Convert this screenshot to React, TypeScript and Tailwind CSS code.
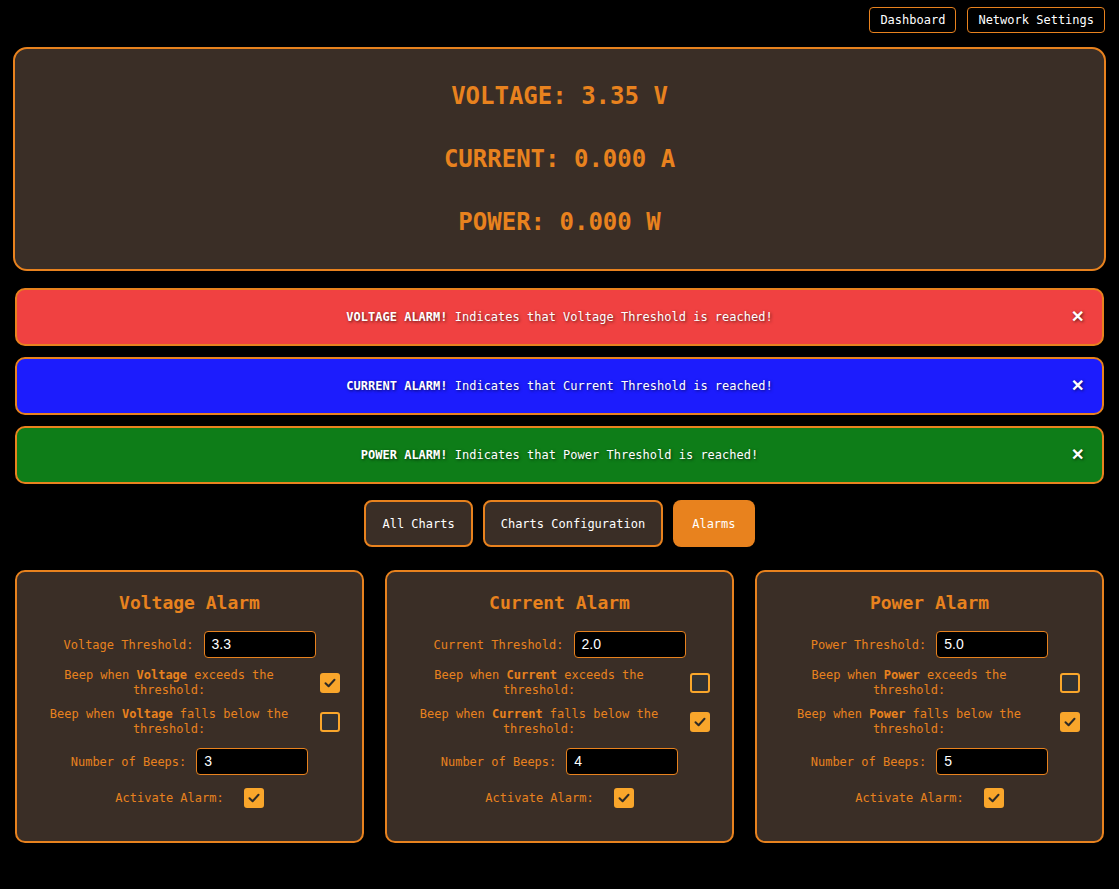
import React from "react";

const mono = { fontFamily: '"DejaVu Sans Mono", "Liberation Mono", monospace' };

function Check({ checked }: { checked: boolean }) {
  if (checked) {
    return (
      <div className="w-[20px] h-[20px] shrink-0 rounded-[3px] bg-[#f9a62b] flex items-center justify-center">
        <svg width="14" height="14" viewBox="0 0 14 14">
          <path d="M2.5 7.2 L5.6 10.2 L11.5 3.8" fill="none" stroke="#2e2a26" strokeWidth="2" strokeLinecap="round" strokeLinejoin="round" />
        </svg>
      </div>
    );
  }
  return <div className="w-[20px] h-[20px] shrink-0 rounded-[3px] bg-[#333232] border-2 border-[#f9a62b]" />;
}

function Input({ value }: { value: string }) {
  return (
    <div
      className="w-[112px] h-[27px] shrink-0 rounded-[4px] bg-black border border-[#e8821e] flex items-center px-[7px] text-white text-[14px]"
      style={{ fontFamily: '"Liberation Sans", Arial, sans-serif' }}
    >
      {value}
    </div>
  );
}

function Card({
  title,
  name,
  threshold,
  beeps,
  exceed,
  below,
}: {
  title: string;
  name: string;
  threshold: string;
  beeps: string;
  exceed: boolean;
  below: boolean;
}) {
  return (
    <div className="flex-1 h-[273px] rounded-[10px] border-2 border-[#e8821e] bg-[#3a2e26] flex flex-col items-center pt-[19px] text-[#e8821e] text-[12px]">
      <div className="text-[18px] font-bold leading-[24px]">{title}</div>
      <div className="flex items-center mt-[16px]">
        <span className="mr-[10px]">{name} Threshold:</span>
        <Input value={threshold} />
      </div>
      <div className="w-full flex items-center px-[22px] gap-[21px] mt-[10px]">
        <div className="flex-1 text-center leading-[15px]">
          Beep when <b>{name}</b> exceeds the threshold:
        </div>
        <Check checked={exceed} />
      </div>
      <div className="w-full flex items-center px-[22px] gap-[21px] mt-[9px]">
        <div className="flex-1 text-center leading-[15px]">
          Beep when <b>{name}</b> falls below the threshold:
        </div>
        <Check checked={below} />
      </div>
      <div className="flex items-center mt-[11px]">
        <span className="mr-[10px]">Number of Beeps:</span>
        <Input value={beeps} />
      </div>
      <div className="flex items-center mt-[13px] gap-[20px]">
        <span>Activate Alarm:</span>
        <Check checked={true} />
      </div>
    </div>
  );
}

function Banner({ color, kind, name }: { color: string; kind: string; name: string }) {
  return (
    <div className={`relative h-[58px] rounded-[10px] border-2 border-[#e8821e] flex items-center justify-center text-white text-[12px] ${color}`}>
      <span style={{ textShadow: "1px 1px 3px rgba(0,0,0,0.6)" }}>
        <b>{kind} ALARM!</b> Indicates that {name} Threshold is reached!
      </span>
      <span
        className="absolute right-[18px] top-1/2 -translate-y-1/2 text-[16px] font-bold leading-none"
        style={{ textShadow: "1px 1px 3px rgba(0,0,0,0.6)", fontFamily: '"Liberation Sans", Arial, sans-serif' }}
      >
        ✕
      </span>
    </div>
  );
}

export default function App() {
  return (
    <div className="min-h-[889px] w-full bg-black" style={mono}>
      <div className="flex justify-end gap-[11px] pt-[7px] pr-[14px]">
        <div className="h-[26px] px-[10px] rounded-[4px] border border-[#e8821e] text-white text-[12px] flex items-center">Dashboard</div>
        <div className="h-[26px] px-[10px] rounded-[4px] border border-[#e8821e] text-white text-[12px] flex items-center">Network Settings</div>
      </div>
      <div className="mx-[13px] mt-[14px] rounded-[14px] border-2 border-[#e8821e] bg-[#3a2e26] flex flex-col items-center py-[32px] gap-[33px] text-[#e8821e] text-[24px] font-bold leading-[30px]">
        <div>VOLTAGE: 3.35 V</div>
        <div>CURRENT: 0.000 A</div>
        <div>POWER: 0.000 W</div>
      </div>
      <div className="mx-[15px] mt-[17px] flex flex-col gap-[11px]">
        <Banner color="bg-[#f04141]" kind="VOLTAGE" name="Voltage" />
        <Banner color="bg-[#1c1cfd]" kind="CURRENT" name="Current" />
        <Banner color="bg-[#0e7d18]" kind="POWER" name="Power" />
      </div>
      <div className="flex justify-center gap-[10px] mt-[16px] text-white text-[12px]">
        <div className="h-[47px] px-[16px] rounded-[8px] border-2 border-[#e8821e] bg-[#3a2e26] flex items-center">All Charts</div>
        <div className="h-[47px] px-[16px] rounded-[8px] border-2 border-[#e8821e] bg-[#3a2e26] flex items-center">Charts Configuration</div>
        <div className="h-[47px] px-[19px] rounded-[8px] bg-[#e8821e] flex items-center">Alarms</div>
      </div>
      <div className="mx-[15px] mt-[23px] flex gap-[21px]">
        <Card title="Voltage Alarm" name="Voltage" threshold="3.3" beeps="3" exceed={true} below={false} />
        <Card title="Current Alarm" name="Current" threshold="2.0" beeps="4" exceed={false} below={true} />
        <Card title="Power Alarm" name="Power" threshold="5.0" beeps="5" exceed={false} below={true} />
      </div>
    </div>
  );
}
